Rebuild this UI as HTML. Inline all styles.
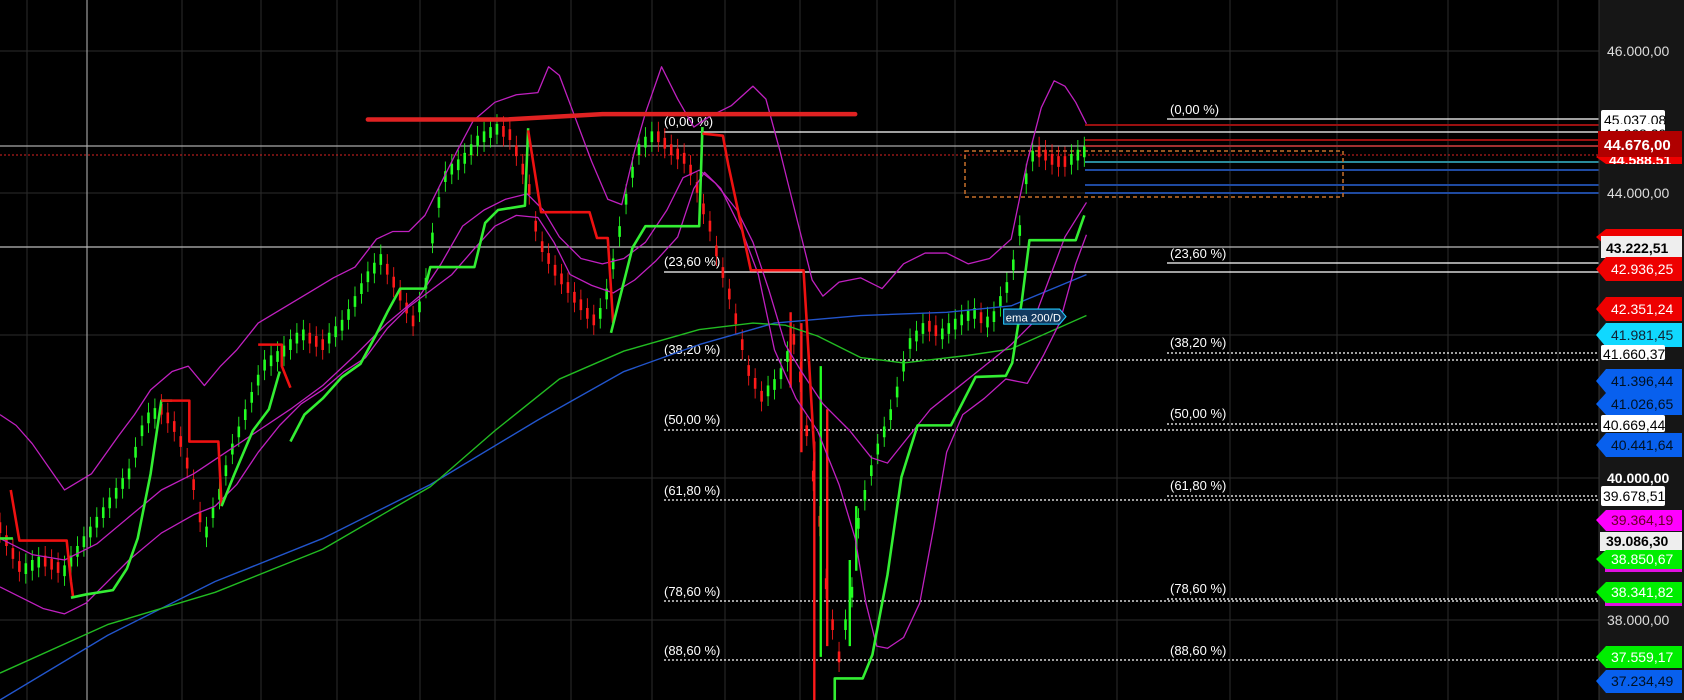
<!DOCTYPE html>
<html><head><meta charset="utf-8"><style>
html,body{margin:0;padding:0;background:#000;width:1684px;height:700px;overflow:hidden}
svg{display:block}
text{font-family:"Liberation Sans",sans-serif}
</style></head><body>
<svg width="1684" height="700" viewBox="0 0 1684 700" xmlns="http://www.w3.org/2000/svg" xmlns:xlink="http://www.w3.org/1999/xlink">
<defs>
<clipPath id="c1"><rect x="1596" y="150" width="88" height="14"/></clipPath>
<path id="gb" d="M24,523v10M30,520v10M36,517v10M60,525v10M66,516v10M72,507v10M78,498v10M84,489v10M90,480v10M96,471v10M102,462v10M108,453v10M114,444v10M120,435v10M126,415v10M132,395v10M138,383v10M144,379v10M192,489v10M198,471v10M204,454v10M210,432v10M216,412v10M222,396v10M228,380v10M234,364v10M240,348v10M246,334v10M252,330v10M258,326v10M264,321v10M270,315v10M276,309v10M282,306v10M306,309v10M312,303v10M318,297v10M324,287v10M330,275v10M336,263v10M342,252v10M348,244v10M354,236v10M390,280v10M396,258v10M402,216v10M408,183v10M414,159v10M420,152v10M426,148v10M432,142v10M438,134v10M444,126v10M450,122v10M456,118v10M462,115v10M558,286v10M564,268v10M570,240v10M576,210v10M582,180v10M588,155v10M594,134v10M600,127v10M606,122v10M714,358v10M720,352v10M726,342v10M732,326v10M786,575v10M792,545v10M798,481v10M804,455v10M810,432v10M816,412v10M822,396v10M828,380v10M834,359v10M840,335v10M846,314v10M852,307v10M858,300v10M876,305v10M882,300v10M888,296v10M894,292v10M900,288v10M906,286v10M918,294v10M924,289v10M930,275v10M936,262v10M942,241v10M948,209v10M954,161v10M960,140v10M996,143v10M1002,139v10M1008,136v10"/>
<path id="rb" d="M0,485v10M6,497v10M12,509v10M18,521v10M42,516v10M48,519v10M54,522v10M150,375v10M156,383v10M162,391v10M168,405v10M174,425v10M180,445v10M186,475v10M288,309v10M294,312v10M300,315v10M360,245v10M366,257v10M372,269v10M378,281v10M384,293v10M468,117v10M474,120v10M480,135v10M486,152v10M492,171v10M498,205v10M504,224v10M510,235v10M516,246v10M522,254v10M528,262v10M534,271v10M540,278v10M546,286v10M552,292v10M612,122v10M618,128v10M624,134v10M630,138v10M636,142v10M642,153v10M648,169v10M654,189v10M660,205v10M666,228v10M672,248v10M678,268v10M684,291v10M690,315v10M696,339v10M702,351v10M708,363v10M738,310v10M744,345v10M750,395v10M756,437v10M762,479v10M768,537v10M774,575v10M780,605v10M864,298v10M870,302v10M912,290v10M966,136v10M972,139v10M978,143v10M984,145v10M990,145v10"/>
</defs>
<rect width="1684" height="700" fill="#000"/>
<g stroke="#2b2b2b" stroke-width="1">
<line x1="0" y1="51" x2="1599" y2="51"/><line x1="0" y1="193" x2="1599" y2="193"/><line x1="0" y1="335" x2="1599" y2="335"/><line x1="0" y1="478" x2="1599" y2="478"/><line x1="0" y1="620" x2="1599" y2="620"/>
<line x1="27" y1="0" x2="27" y2="700"/><line x1="182" y1="0" x2="182" y2="700"/><line x1="261" y1="0" x2="261" y2="700"/><line x1="337" y1="0" x2="337" y2="700"/><line x1="420" y1="0" x2="420" y2="700"/><line x1="495" y1="0" x2="495" y2="700"/><line x1="571" y1="0" x2="571" y2="700"/><line x1="652" y1="0" x2="652" y2="700"/><line x1="725" y1="0" x2="725" y2="700"/><line x1="800" y1="0" x2="800" y2="700"/><line x1="877" y1="0" x2="877" y2="700"/><line x1="955" y1="0" x2="955" y2="700"/><line x1="1117" y1="0" x2="1117" y2="700"/><line x1="1230" y1="0" x2="1230" y2="700"/><line x1="1337" y1="0" x2="1337" y2="700"/><line x1="1448" y1="0" x2="1448" y2="700"/><line x1="1558" y1="0" x2="1558" y2="700"/>
</g>
<line x1="87" y1="0" x2="87" y2="700" stroke="#bbb" stroke-width="1"/>
<line x1="0" y1="146" x2="1599" y2="146" stroke="#aaa" stroke-width="1.3"/>
<line x1="0" y1="155" x2="1599" y2="155" stroke="#d22" stroke-width="1" stroke-dasharray="2,2"/>
<line x1="0" y1="247" x2="1599" y2="247" stroke="#bbb" stroke-width="1.3"/>
<line x1="664" y1="132" x2="1599" y2="132" stroke="#fff" stroke-width="1.3"/>
<line x1="664" y1="272" x2="1599" y2="272" stroke="#fff" stroke-width="1.3"/>
<line x1="1167" y1="119" x2="1599" y2="119" stroke="#fff" stroke-width="1.3"/>
<line x1="1167" y1="263" x2="1599" y2="263" stroke="#fff" stroke-width="1.3"/>
<g stroke="#fff" stroke-width="1.3" stroke-dasharray="2,2">
<line x1="664" y1="360" x2="1599" y2="360"/><line x1="664" y1="430" x2="1599" y2="430"/><line x1="664" y1="500" x2="1599" y2="500"/><line x1="664" y1="601" x2="1599" y2="601"/><line x1="664" y1="660" x2="1599" y2="660"/>
<line x1="1167" y1="353" x2="1599" y2="353"/><line x1="1167" y1="424" x2="1599" y2="424"/><line x1="1167" y1="496" x2="1599" y2="496"/><line x1="1167" y1="599" x2="1599" y2="599"/>
</g>
<line x1="1085" y1="125" x2="1599" y2="125" stroke="#9a1010" stroke-width="2"/>
<line x1="1085" y1="140" x2="1599" y2="140" stroke="#9a1010" stroke-width="2"/>
<line x1="1085" y1="146" x2="1599" y2="146" stroke="#a03030" stroke-width="2"/>
<line x1="1085" y1="162" x2="1599" y2="162" stroke="#2a8a9a" stroke-width="2"/>
<line x1="1085" y1="170" x2="1599" y2="170" stroke="#1f4aa0" stroke-width="2"/>
<line x1="1085" y1="185" x2="1599" y2="185" stroke="#1f4aa0" stroke-width="2"/>
<line x1="1085" y1="193" x2="1599" y2="193" stroke="#1f4aa0" stroke-width="2"/>
<rect x="965" y="151" width="378" height="46" fill="none" stroke="#c8702a" stroke-width="1.5" stroke-dasharray="4,3"/>
<g fill="#fff" font-size="13">
<text x="664" y="126">(0,00 %)</text><text x="664" y="266">(23,60 %)</text><text x="664" y="354">(38,20 %)</text><text x="664" y="424">(50,00 %)</text><text x="664" y="495">(61,80 %)</text><text x="664" y="596">(78,60 %)</text><text x="664" y="655">(88,60 %)</text>
<text x="1170" y="114">(0,00 %)</text><text x="1170" y="258">(23,60 %)</text><text x="1170" y="347">(38,20 %)</text><text x="1170" y="418">(50,00 %)</text><text x="1170" y="490">(61,80 %)</text><text x="1170" y="593">(78,60 %)</text><text x="1170" y="655">(88,60 %)</text>
</g>
<g transform="scale(1.0757,1.0769)" fill="none" stroke-linejoin="round">
<g fill="none">
<use xlink:href="#gb" href="#gb" stroke="#22ff22" stroke-width="0.8" transform="translate(0,-9)"/>
<use xlink:href="#gb" href="#gb" stroke="#22ff22" stroke-width="0.8" transform="translate(0,9)"/>
<use xlink:href="#gb" href="#gb" stroke="#22ff22" stroke-width="2.4"/>
<use xlink:href="#rb" href="#rb" stroke="#ff1a1a" stroke-width="0.8" transform="translate(0,-9)"/>
<use xlink:href="#rb" href="#rb" stroke="#ff1a1a" stroke-width="0.8" transform="translate(0,9)"/>
<use xlink:href="#rb" href="#rb" stroke="#ff1a1a" stroke-width="2.4"/>
<path d="M757,410V650M769,380V600M735,290V360M745,300V420" stroke="#ff1a1a" stroke-width="2.2"/>
<path d="M763,340V610M790,520V600M796,470V530" stroke="#22ff22" stroke-width="2.2"/>
</g>
<path d="M0,650 L100,590 L200,540 L300,500 L400,450 L500,390 L580,345 L650,320 L720,300 L800,293 L880,290 L940,284 L1010,255" stroke="#2255cc" stroke-width="1.3"/>
<path d="M0,625 L100,580 L200,550 L300,510 L400,452 L460,400 L520,352 L580,326 L650,306 L700,300 L730,302 L760,312 L800,332 L840,337 L900,330 L940,324 L1010,293" stroke="#22bb22" stroke-width="1.3"/>
<g stroke="#c020c0" stroke-width="1.2">
<path d="M0,385 L15,395 L30,412 L60,455 L85,440 L110,405 L125,385 L140,362 L160,345 L175,340 L190,358 L205,340 L220,325 L240,300 L265,285 L290,270 L310,258 L330,248 L350,222 L365,215 L380,215 L395,200 L410,170 L425,140 L440,112 L460,95 L480,88 L500,86 L510,62 L520,70 L535,110 L550,150 L565,185 L578,190 L590,140 L600,105 L615,62 L630,92 L645,118 L660,108 L680,98 L700,80 L712,92 L725,140 L740,200 L755,260 L765,275 L780,262 L800,258 L820,268 L840,245 L860,235 L880,235 L900,245 L920,240 L940,222 L955,150 L968,100 L980,75 L990,80 L1000,95 L1010,115"/>
<path d="M0,545 L20,555 L40,565 L60,570 L80,560 L100,540 L120,520 L150,495 L180,478 L200,470 L220,450 L240,420 L260,395 L280,375 L300,362 L320,345 L340,332 L360,305 L380,285 L400,270 L420,255 L440,232 L460,210 L480,200 L500,202 L515,225 L530,255 L550,265 L570,272 L590,260 L610,242 L630,220 L645,175 L655,160 L670,175 L690,215 L705,255 L720,325 L740,370 L760,400 L780,450 L795,500 L805,560 L815,600 L825,602 L840,592 L855,560 L868,490 L880,420 L895,385 L915,370 L935,352 L955,356 L970,330 L985,300 L1000,245 L1010,218"/>
<path d="M0,500 L30,515 L60,520 L90,505 L120,480 L150,455 L180,440 L210,420 L240,400 L270,380 L300,358 L330,330 L360,300 L390,275 L410,245 L430,210 L450,195 L470,185 L490,180 L505,195 L520,220 L540,240 L560,245 L580,240 L600,225 L620,195 L635,165 L650,158 L665,170 L685,195 L700,225 L715,270 L730,320 L745,345 L765,375 L790,400 L810,425 L825,430 L845,405 L865,380 L890,360 L915,340 L940,320 L960,300 L975,260 L990,220 L1010,188"/>
</g>
<g stroke-width="2.4">
<path d="M0,500 L12,500" stroke="#33ee33"/>
<path d="M10,455 L18,502 L62,502 L66,540 L68,555" stroke="#ee1111"/>
<path d="M66,555 L80,552 L105,548 L118,528 L128,500 L140,440 L150,372 L160,372" stroke="#33ee33"/>
<path d="M150,372 L176,372 L176,410 L203,410 L206,470" stroke="#ee1111"/>
<path d="M206,470 L218,440 L235,400 L250,380 L260,345" stroke="#33ee33"/>
<path d="M240,320 L262,320 L262,340 L270,360" stroke="#ee1111"/>
<path d="M270,410 L283,385 L300,370 L318,350 L335,338 L350,310 L360,290 L372,268 L395,268 L400,248 L441,248 L451,207 L463,195 L488,191 L491,119" stroke="#33ee33"/>
<path d="M491,121 L503,197 L548,197 L555,221 L565,221 L570,300" stroke="#ee1111"/>
<path d="M568,309 L588,230 L600,210 L650,210 L653,118" stroke="#33ee33"/>
<path d="M653,124 L672,126 L677,153 L698,251 L747,251 L750,300 L757,420" stroke="#ee1111"/>
<path d="M776,650 L776,630 L802,630 L811,608 L825,534 L838,443 L853,395 L884,395 L907,350 L935,349 L941,337 L950,279 L957,223 L1000,223 L1008,200" stroke="#33ee33"/>
</g>
<path d="M342,111 L470,111 L560,106 L795,106" stroke="#e02222" stroke-width="4.2" stroke-linecap="round"/>
<polygon points="933,287 985,287 991,294 985,301 933,301" fill="#123a60" stroke="#22c8ff" stroke-width="1"/>
<text x="935" y="298.5" fill="#fff" font-size="10.5" stroke="none">ema 200/D</text>
</g>
<rect x="1599" y="0" width="85" height="700" fill="#161616"/>
<line x1="1599" y1="0" x2="1599" y2="700" stroke="#333"/>
<g font-size="14">
<text x="1607" y="56" fill="#ddd">46.000,00</text>
<text x="1607" y="198" fill="#ddd">44.000,00</text>
<text x="1607" y="483" fill="#fff" font-weight="bold">40.000,00</text>
<text x="1607" y="625" fill="#ddd">38.000,00</text>

<g clip-path="url(#c1)"><polygon points="1596,157 1606,150 1682,150 1682,164 1606,164" fill="#ee0000"/><text x="1609" y="165" fill="#fff" font-weight="bold">44.588,51</text></g>
<rect x="1601" y="110" width="64" height="18" rx="2" fill="#fff"/><text x="1604" y="125" fill="#000">45.037,08</text>
<rect x="1601" y="124" width="64" height="14" rx="2" fill="#fff"/><text x="1604" y="139" fill="#000">44.868,29</text>
<rect x="1598" y="131" width="84" height="26" fill="#b00000"/><text x="1604" y="150" fill="#fff" font-weight="bold" font-size="15">44.676,00</text>
<polygon points="1596,237 1606,229 1682,229 1682,246 1606,246" fill="#ee0000"/>
<rect x="1601" y="236" width="81" height="22" fill="#eeeeee"/><text x="1606" y="253" fill="#000" font-weight="bold">43.222,51</text>
<polygon points="1596,269 1606,257 1682,257 1682,281 1606,281" fill="#ee0000"/><text x="1611" y="274" fill="#fff">42.936,25</text>
<polygon points="1596,309 1606,297 1682,297 1682,321 1606,321" fill="#ee0000"/><text x="1611" y="314" fill="#fff">42.351,24</text>
<polygon points="1596,335 1606,323 1682,323 1682,347 1606,347" fill="#10d8ff"/><text x="1611" y="340" fill="#123">41.981,45</text>
<rect x="1601" y="345" width="64" height="15" rx="2" fill="#fff"/><text x="1603" y="359" fill="#000">41.660,37</text>
<polygon points="1596,381 1606,369 1682,369 1682,393 1606,393" fill="#0860ee"/><text x="1611" y="386" fill="#012">41.396,44</text>
<polygon points="1596,404 1606,393 1682,393 1682,415 1606,415" fill="#0860ee"/><text x="1611" y="409" fill="#012">41.026,65</text>
<rect x="1601" y="415" width="64" height="17" rx="2" fill="#fff"/><text x="1603" y="430" fill="#000">40.669,44</text>
<polygon points="1596,445 1606,433 1682,433 1682,457 1606,457" fill="#0860ee"/><text x="1611" y="450" fill="#012">40.441,64</text>
<rect x="1601" y="486" width="64" height="20" rx="2" fill="#fff"/><text x="1603" y="501" fill="#000">39.678,51</text>
<polygon points="1596,520 1606,510 1682,510 1682,531 1606,531" fill="#ff00ff"/><text x="1611" y="525" fill="#602">39.364,19</text>
<rect x="1600" y="532" width="82" height="19" fill="#eeeeee"/><text x="1606" y="546" fill="#000" font-weight="bold">39.086,30</text>
<rect x="1605" y="566" width="77" height="6" fill="#e010e0"/>
<polygon points="1596,559 1606,550 1682,550 1682,569 1606,569" fill="#00ee00"/><text x="1611" y="564" fill="#fff">38.850,67</text>
<rect x="1605" y="600" width="77" height="6" fill="#e010e0"/>
<polygon points="1596,592 1606,582 1682,582 1682,603 1606,603" fill="#00ee00"/><text x="1611" y="597" fill="#fff">38.341,82</text>
<polygon points="1596,657 1606,646 1682,646 1682,668 1606,668" fill="#00ee00"/><text x="1611" y="662" fill="#fff">37.559,17</text>
<polygon points="1596,681 1606,670 1682,670 1682,693 1606,693" fill="#0860ee"/><text x="1611" y="686" fill="#012">37.234,49</text>
</g>
</svg>
</body></html>
